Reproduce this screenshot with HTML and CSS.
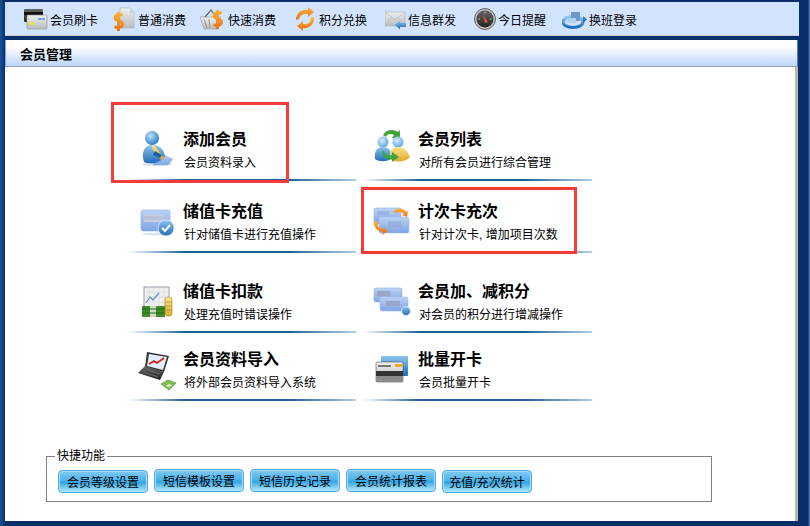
FILE: index.html
```html
<!DOCTYPE html>
<html lang="zh-CN">
<head>
    <meta charset="UTF-8">
    <title>会员管理</title>
    <link rel="stylesheet" href="styles.css">
</head>
<body>
    <svg class="defs" width="0" height="0">
        <defs>
            <linearGradient id="gBlue" x1="0" y1="0" x2="0" y2="1"><stop offset="0" stop-color="#8cc4f0"/><stop offset="1" stop-color="#1f6db8"/></linearGradient>
            <linearGradient id="gYellow" x1="0" y1="0" x2="0" y2="1"><stop offset="0" stop-color="#fbe68a"/><stop offset="1" stop-color="#e0a92e"/></linearGradient>
            <linearGradient id="gCard" x1="0" y1="0" x2="0" y2="1"><stop offset="0" stop-color="#bcd2f4"/><stop offset="1" stop-color="#7fa5e4"/></linearGradient>
            <linearGradient id="gOrange" x1="0" y1="0" x2="0" y2="1"><stop offset="0" stop-color="#fdb52e"/><stop offset="1" stop-color="#e8701a"/></linearGradient>
            <linearGradient id="gGrey" x1="0" y1="0" x2="0" y2="1"><stop offset="0" stop-color="#eef0f0"/><stop offset="1" stop-color="#b8bcbc"/></linearGradient>
            <linearGradient id="gDark" x1="0" y1="0" x2="0" y2="1"><stop offset="0" stop-color="#666"/><stop offset="1" stop-color="#222"/></linearGradient>
            <radialGradient id="gHead" cx="0.4" cy="0.35" r="0.7"><stop offset="0" stop-color="#bfe2fa"/><stop offset="1" stop-color="#2477c4"/></radialGradient>
            <radialGradient id="gHeadY" cx="0.4" cy="0.35" r="0.7"><stop offset="0" stop-color="#d4ecfb"/><stop offset="1" stop-color="#5aa5e0"/></radialGradient>
        </defs>
    </svg>

    <nav class="toolbar">
        <a class="tool">
            <svg width="26" height="24" viewBox="0 0 26 24"><rect x="0" y="2" width="19" height="13" rx="1" fill="url(#gDark)"/><rect x="0" y="5" width="19" height="3" fill="#111"/><rect x="3" y="8" width="20" height="14" rx="1" fill="url(#gGrey)" stroke="#888" stroke-width=".6"/><rect x="5" y="15" width="5" height="3" fill="#e8e04a"/><rect x="14" y="11" width="7" height="2" fill="#7aa6d8"/></svg>
            <span>会员刷卡</span>
        </a>
        <a class="tool">
            <svg width="25" height="24" viewBox="0 0 25 24"><path d="M7 1h10l4 5v15H7z" fill="url(#gGrey)" stroke="#b0b0b0" stroke-width=".6"/><path d="M17 1v5h4z" fill="#cfcfcf"/><path d="M9.500 8.500C6 6.500 2 8 2 11s7.500 2.500 7.500 6-5 4.500-8 2.500M5.500 5v19" fill="none" stroke="url(#gOrange)" stroke-width="3"/></svg>
            <span>普通消费</span>
        </a>
        <a class="tool">
            <svg width="28" height="24" viewBox="0 0 28 24"><path d="M0 10h21l-3 12H4z" fill="url(#gGrey)" stroke="#999" stroke-width=".6"/><path d="M5 10l6-7 5 7" fill="none" stroke="#666" stroke-width="1.200"/><path d="M4 12l3 9M9 12l1 9" stroke="#888" stroke-width=".8"/><path d="M21.500 6.500C18 4.500 14 6 14 9s7.500 2.500 7.500 6-5 4.500-8 2.500M17.500 3v19" fill="none" stroke="url(#gOrange)" stroke-width="3"/></svg>
            <span>快速消费</span>
        </a>
        <a class="tool">
            <svg width="25" height="24" viewBox="0 0 25 24"><path d="M2 13C2 6 8 2 14 3V0l6 5-6 5V7C10 6 6 8 5 12z" fill="url(#gOrange)"/><path d="M20 10c1 7-5 12-11 11v3l-6-5 6-5v3c4 1 8-1 8-6z" fill="url(#gOrange)"/></svg>
            <span>积分兑换</span>
        </a>
        <a class="tool">
            <svg width="23" height="24" viewBox="0 0 23 24"><rect x="0" y="5" width="20" height="14" fill="url(#gGrey)" stroke="#aaa" stroke-width=".6"/><path d="M0 5l10 8 10-8M0 19l7-9M20 19l-7-9" fill="none" stroke="#bbb" stroke-width=".8"/><path d="M21 16h-6v-2.500L10 18l5 4.500V20h6z" fill="url(#gBlue)"/></svg>
            <span>信息群发</span>
        </a>
        <a class="tool">
            <svg width="24" height="24" viewBox="0 0 24 24"><circle cx="11" cy="12" r="10.500" fill="#bdbdbd" stroke="#666"/><circle cx="11" cy="12" r="8.500" fill="url(#gDark)"/><path d="M9 8l5 7-3 1z" fill="#e8562a"/><path d="M11 5v1.500M17.500 12H16M4.500 12H6" stroke="#ccc"/></svg>
            <span>今日提醒</span>
        </a>
        <a class="tool">
            <svg width="27" height="24" viewBox="0 0 27 24"><ellipse cx="11" cy="15" rx="10" ry="5.500" fill="none" stroke="url(#gBlue)" stroke-width="3"/><rect x="9" y="5" width="9" height="9" fill="#6f97c4"/><path d="M21 9l4 3.500-4 3.500z" fill="#2a78c0"/><rect x="5" y="11" width="9" height="5" fill="#aed3f2"/></svg>
            <span>换班登录</span>
        </a>
    </nav>

    <main class="panel">
        <h2 class="panel-title">会员管理</h2>
        <div class="panel-body">
            <div class="menu">
                <a class="item">
                    <svg class="item-icon" width="44" height="44" viewBox="0 0 44 44">
                        <ellipse cx="22" cy="37" rx="15" ry="2" fill="#dbe4ee"/>
                        <path d="M24 26l14 6-5 6H18z" fill="url(#gCard)" stroke="#a9bfdc" stroke-width=".5"/>
                        <circle cx="17" cy="11" r="7" fill="url(#gHead)"/>
                        <path d="M9 35c-3-9 0-17 8-17s12 5 13 11c-4 7-15 9-21 6z" fill="url(#gBlue)"/>
                        <path d="M16 18l4 1 9 12-3 2-8-10z" fill="url(#gYellow)"/>
                        <path d="M20 24l7 4-2 3-7-3z" fill="#1d5f9e"/>
                    </svg>
                    <div class="item-text"><h3>添加会员</h3><p>会员资料录入</p></div>
                </a>
                <a class="item">
                    <svg class="item-icon" width="44" height="44" viewBox="0 0 44 44">
                        <path d="M13 8C16 2 24 2 28 5l2-2v8h-8l2-3c-3-2-7-1-8 2z" fill="#3fa63c"/>
                        <circle cx="13" cy="15" r="5.500" fill="url(#gHeadY)"/>
                        <path d="M5 32c-1-8 2-12 8-12s9 4 8 12c-5 3-12 3-16 0z" fill="url(#gBlue)"/>
                        <circle cx="28" cy="15" r="5.500" fill="url(#gHeadY)"/>
                        <path d="M20 32c-1-8 2-12 8-12s10 4 12 10c-4 5-14 6-20 2z" fill="url(#gYellow)"/>
                        <path d="M14 24c1 4 5 5 8 4v-3l7 5-7 5v-3c-5 1-10-2-10-8z" fill="#3fa63c"/>
                    </svg>
                    <div class="item-text"><h3>会员列表</h3><p>对所有会员进行综合管理</p></div>
                </a>
                <a class="item">
                    <svg class="item-icon" width="44" height="44" viewBox="0 0 44 44">
                        <ellipse cx="22" cy="35" rx="15" ry="1.500" fill="#dde4ec"/>
                        <rect x="6" y="11" width="29" height="21" rx="2" fill="url(#gCard)" stroke="#8fb0e6" stroke-width=".6"/>
                        <rect x="9" y="16" width="19" height="7" fill="#c9cfe0"/>
                        <path d="M9 18h19M9 20h19" stroke="#97a4c8" stroke-width=".6"/>
                        <circle cx="31" cy="29" r="8" fill="url(#gBlue)" stroke="#cfe0f5"/>
                        <path d="M27 29l3 3 5-6" fill="none" stroke="#fff" stroke-width="2"/>
                    </svg>
                    <div class="item-text"><h3>储值卡充值</h3><p>针对储值卡进行充值操作</p></div>
                </a>
                <a class="item">
                    <svg class="item-icon" width="44" height="44" viewBox="0 0 44 44">
                        <rect x="4" y="9" width="27" height="16" rx="2" fill="url(#gCard)" stroke="#8fb0e6" stroke-width=".6"/>
                        <path d="M7 13h12M7 15h12" stroke="#8da4c8"/>
                        <rect x="9" y="18" width="30" height="16" rx="2" fill="url(#gCard)" stroke="#9fbcec" stroke-width=".6"/>
                        <path d="M18 23h13M18 25h13M18 27h13" stroke="#8da4c8"/>
                        <path d="M24 12c4-4 10-3 12 1l2-1-1 6-5-2 2-1c-2-2-6-3-9-1z" fill="url(#gOrange)"/>
                        <path d="M4 22c-1 6 3 10 9 11l-1 3 6-4-5-4v2c-4 0-6-3-5-7z" fill="url(#gOrange)"/>
                    </svg>
                    <div class="item-text"><h3>计次卡充次</h3><p>针对计次卡, 增加项目次数</p></div>
                </a>
                <a class="item">
                    <svg class="item-icon" width="44" height="44" viewBox="0 0 44 44">
                        <rect x="9" y="8" width="25" height="24" fill="#eef0f2" stroke="#9aa0a6"/>
                        <path d="M14 8v24M19 8v24M24 8v24M29 8v24M9 13h25M9 18h25M9 23h25" stroke="#d0d4d8" stroke-width=".6"/>
                        <path d="M11 24l4-6 3 3 6-7" fill="none" stroke="#6f8fc8" stroke-width="1.200"/>
                        <rect x="7" y="27" width="23" height="11" fill="#3e8e2a"/>
                        <rect x="15" y="27" width="6" height="11" fill="#cfd8cc"/>
                        <path d="M7 30h23M7 34h23" stroke="#256b18"/>
                        <rect x="30" y="18" width="7" height="19" rx="3" fill="url(#gYellow)" stroke="#a87d10" stroke-width=".6"/>
                        <path d="M30 23h7M30 27h7M30 31h7" stroke="#a87d10" stroke-width=".6"/>
                    </svg>
                    <div class="item-text"><h3>储值卡扣款</h3><p>处理充值时错误操作</p></div>
                </a>
                <a class="item">
                    <svg class="item-icon" width="44" height="44" viewBox="0 0 44 44">
                        <rect x="4" y="9" width="28" height="14" rx="2" fill="url(#gCard)" stroke="#8fb0e6" stroke-width=".6"/>
                        <rect x="7" y="12" width="13" height="5" fill="#9aa6c6"/>
                        <rect x="10" y="18" width="28" height="14" rx="2" fill="url(#gCard)" stroke="#9fbcec" stroke-width=".6"/>
                        <rect x="16" y="22" width="14" height="5" fill="#9aa6c6"/>
                        <circle cx="36" cy="32" r="4.500" fill="url(#gBlue)" stroke="#d5e6f5"/>
                    </svg>
                    <div class="item-text"><h3>会员加、减积分</h3><p>对会员的积分进行增减操作</p></div>
                </a>
                <a class="item">
                    <svg class="item-icon" width="44" height="44" viewBox="0 0 44 44">
                        <path d="M12 5l22 4-5 16-19-5z" fill="#333"/>
                        <path d="M14 7l18 3-4 13-16-4z" fill="#dfeefb"/>
                        <path d="M14 17l5-3 3 2 7-5" fill="none" stroke="#e21818" stroke-width="1.600"/>
                        <path d="M10 19l19 6-4 8-22-7z" fill="url(#gDark)"/>
                        <path d="M10 22l15 5M8 25l15 5" stroke="#777" stroke-width=".8"/>
                        <path d="M26 37l7-4 8 3-7 7z" fill="#7cc24a" stroke="#4d8a2a" stroke-width=".6"/>
                        <path d="M31 39l3-2 3 1-3 2z" fill="#eef4e8"/>
                    </svg>
                    <div class="item-text"><h3>会员资料导入</h3><p>将外部会员资料导入系统</p></div>
                </a>
                <a class="item">
                    <svg class="item-icon" width="44" height="44" viewBox="0 0 44 44">
                        <rect x="11" y="9" width="27" height="20" rx="1" fill="url(#gBlue)"/>
                        <rect x="6" y="15" width="27" height="20" rx="1.500" fill="url(#gGrey)" stroke="#555" stroke-width=".6"/>
                        <rect x="6" y="24" width="27" height="5" fill="#333"/>
                        <rect x="6" y="29" width="27" height="6" rx="1" fill="#8a8a8a"/>
                        <rect x="8" y="18" width="13" height="2" fill="#777"/>
                        <rect x="25" y="17" width="7" height="3" fill="#e8a92e"/>
                    </svg>
                    <div class="item-text"><h3>批量开卡</h3><p>会员批量开卡</p></div>
                </a>
            </div>

            <fieldset class="quick">
                <legend>快捷功能</legend>
                <button class="btn low">会员等级设置</button>
                <button class="btn">短信模板设置</button>
                <button class="btn">短信历史记录</button>
                <button class="btn">会员统计报表</button>
                <button class="btn low">充值/充次统计</button>
            </fieldset>

            <div class="mark mark-a"></div>
            <div class="mark mark-b"></div>
        </div>
    </main>
</body>
</html>
```

FILE: styles.css
```css
* {
    margin: 0;
    padding: 0;
    box-sizing: border-box;
}

html, body {
    height: 526px;
    overflow: hidden;
}

body {
    font-family: "Liberation Sans", "Noto Sans CJK SC", sans-serif;
    font-size: 12px;
    color: #000;
    padding: 2px 0 0 5px;
    background:
        linear-gradient(90deg, transparent 808px, #5f8fc4 810px),
        linear-gradient(90deg, #14559c, #0a2f6a 5px);
    background-color: #0a2f6a;
}

.defs {
    position: absolute;
}

.toolbar {
    width: 794px;
    height: 34px;
    background-color: #d2e4fd;
    border-bottom: 1px solid #c9ccd0;
    display: grid;
    grid-template-columns: 89px 87px 94px 91px 89px 88px auto;
    padding-left: 19px;
    padding-top: 1px;
    align-items: center;
}

.tool {
    display: flex;
    align-items: center;
    white-space: nowrap;
}

.panel {
    width: 793px;
    margin-top: 4px;
}

.panel-title {
    height: 27px;
    font-size: 13px;
    line-height: 27px;
    padding: 1px 0 0 14px;
    background: linear-gradient(#fff 25%, #bad5fa);
    border-left: 1px solid #7ea8e0;
    border-right: 1px solid #4f7fc8;
    border-bottom: 1px solid #9aa4b0;
}

.panel-body {
    position: relative;
    height: 454px;
    width: 793px;
    background-color: #fff;
    border-right: 3px solid #b9b9ac;
    padding: 42px 0 0 123px;
}

.menu {
    display: grid;
    grid-template-columns: 228px 229px;
    grid-template-rows: 72px 72px 80px 68px;
    column-gap: 7px;
}

.item {
    align-self: end;
    height: 60px;
    display: flex;
    padding: 6px 0 0 7px;
    gap: 4px;
    background: linear-gradient(90deg, #fff, #1c5f96 25%, #1c5f96 70%, #b4cde0) left bottom / 100% 2px no-repeat;
}

.item-text {
    padding-top: 3px;
}

.item-text h3 {
    font-size: 16px;
    line-height: 20px;
}

.item-text p {
    font-size: 12px;
    line-height: 20px;
    margin: 3px 0 0 1px;
}

.quick {
    width: 666px;
    height: 53px;
    margin: 48px 0 0 -82px;
    border: 1px solid #808080;
    padding: 0 0 0 11px;
    display: flex;
    gap: 6px;
    align-items: flex-start;
}

.quick legend {
    margin-left: -3px;
    padding: 0 2px;
    line-height: 14px;
}

.btn {
    width: 90px;
    height: 23px;
    margin-top: 6px;
    font-family: inherit;
    font-size: 12px;
    border: 1px solid #4ea8e6;
    border-radius: 4px;
    box-shadow: inset 0 0 0 1px #a8e0fb;
    background: linear-gradient(#82c9f0, #4fb2ea 45%, #34a4e2 55%, #b4ecfd);
}

.btn.low {
    margin-top: 7px;
}

/* red boxes drawn over the menu */
.mark {
    position: absolute;
    border: 3px solid #f63b3b;
}

.mark-a {
    left: 106px;
    top: 35px;
    width: 178px;
    height: 81px;
}

.mark-b {
    left: 356px;
    top: 120px;
    width: 216px;
    height: 67px;
}
```
